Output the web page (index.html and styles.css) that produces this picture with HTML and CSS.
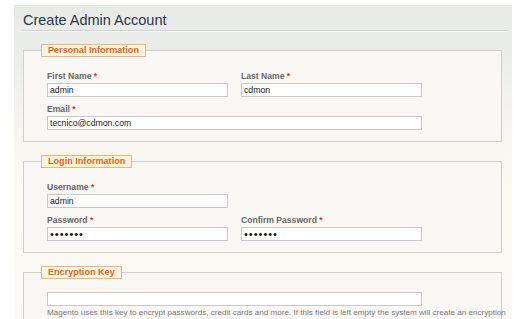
FILE: index.html
```html
<!DOCTYPE html>
<html>
<head>
<meta charset="utf-8">
<link rel="stylesheet" href="styles.css">
</head>
<body>
<div class="page">
  <div class="panel">
    <h2 class="title">Create Admin Account</h2>

    <fieldset class="group">
      <legend class="legend">Personal Information</legend>
      <div class="row">
        <div class="field">
          <label class="label">First Name <span class="req">*</span></label>
          <input class="input" type="text" value="admin">
        </div>
        <div class="field">
          <label class="label">Last Name <span class="req">*</span></label>
          <input class="input" type="text" value="cdmon">
        </div>
      </div>
      <div class="row">
        <div class="field wide">
          <label class="label">Email <span class="req">*</span></label>
          <input class="input" type="text" value="tecnico@cdmon.com">
        </div>
      </div>
    </fieldset>

    <fieldset class="group">
      <legend class="legend">Login Information</legend>
      <div class="row">
        <div class="field">
          <label class="label">Username <span class="req">*</span></label>
          <input class="input" type="text" value="admin">
        </div>
      </div>
      <div class="row">
        <div class="field">
          <label class="label">Password <span class="req">*</span></label>
          <input class="input pass" type="password" value="1234567">
        </div>
        <div class="field">
          <label class="label">Confirm Password <span class="req">*</span></label>
          <input class="input pass" type="password" value="1234567">
        </div>
      </div>
    </fieldset>

    <fieldset class="group last">
      <legend class="legend">Encryption Key</legend>
      <div class="row">
        <div class="field wide">
          <input class="input" type="text" value="">
        </div>
      </div>
      <p class="note">Magento uses this key to encrypt passwords, credit cards and more. If this field is left empty the system will create an encryption key for you.</p>
    </fieldset>
  </div>
</div>
</body>
</html>
```

FILE: styles.css
```css
html, body {
  margin: 0;
  padding: 0;
  background: #ffffff;
  overflow: hidden;
}
.page {
  width: 520px;
  height: 319px;
  padding: 5px 8px 0 14px;
  box-sizing: border-box;
  font-family: "Liberation Sans", Arial, sans-serif;
}
.panel {
  height: 100%;
  padding: 0 4px 0 9px;
  background: linear-gradient(to bottom, #e8eae8 0px, #eceeea 60px, #f8f6f1 130px, #fcf9f4 170px, #fcfaf6 319px);
}
.title {
  margin: 0;
  padding-top: 7px;
  height: 18px;
  font-size: 14.5px;
  font-weight: normal;
  line-height: 17px;
  color: #2b3845;
  border-bottom: 1px solid #cfd3d0;
  box-shadow: 0 1px 0 #f6f7f5;
}
.group {
  margin: 12.5px 6px 0 0;
  padding: 13px 23px 11px 23px;
  border: 1px solid #cfcfcc;
  background: #f9f8f4;
  min-width: 0;
}
.group + .group {
  margin-top: 13px;
}
.legend {
  margin-left: -6px;
  padding: 0 6px;
  border: 1px solid #f6b46a;
  background: #fdf4e4;
  color: #e8650f;
  font-size: 9.1px;
  font-weight: bold;
  line-height: 11.7px;
}
.row {
  display: flex;
  gap: 13.3px;
}
.row + .row {
  margin-top: 5.4px;
}
.field {
  display: flex;
  flex-direction: column;
  width: 180.7px;
}
.field.wide {
  width: 374.7px;
}
.label {
  font-size: 8.6px;
  line-height: 12px;
  margin-bottom: 1px;
  font-weight: bold;
  color: #676767;
}
.req {
  color: #e8340f;
}
.input {
  box-sizing: border-box;
  height: 14px;
  margin: 0;
  padding: 0 2px;
  border: 1px solid #c9c9c9;
  border-radius: 0;
  background: #ffffff;
  font-family: "Liberation Sans", Arial, sans-serif;
  font-size: 8.7px;
  color: #222;
  outline: none;
}
.pass {
  font-size: 11px;
  letter-spacing: 1px;
  color: #111;
}
.note {
  margin: 2px -34px 0 0;
  font-size: 8.1px;
  line-height: 10px;
  color: #7a7a7a;
}
```
